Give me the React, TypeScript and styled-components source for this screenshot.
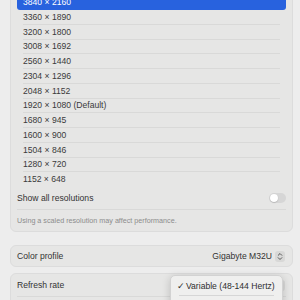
import styled, { createGlobalStyle } from 'styled-components'

const GlobalStyle = createGlobalStyle`
  html, body {
    margin: 0;
    padding: 0;
    background: #ededed;
    overflow: hidden;
    font-family: "Liberation Sans", Arial, sans-serif;
    -webkit-font-smoothing: antialiased;
  }
`

const Page = styled.div`
  display: flex;
  flex-direction: column;
  padding: 0 7px 0 10px;
  margin-top: -10px; /* scrolled list, top card is cut off */
`

const Card = styled.section<{ $gap?: number }>`
  position: relative;
  background: #e6e6e5;
  border: 1px solid #dcdcdc;
  border-radius: 6px;
  padding: 0 6px;
  margin-top: ${({ $gap }) => $gap ?? 0}px;
`

const ResolutionList = styled.ul`
  list-style: none;
  margin: 0;
  padding: 4.25px 0 0;
`

const ResolutionRow = styled.li<{ $selected?: boolean }>`
  height: 14.75px;
  box-sizing: border-box;
  padding: 0 6px;
  border-radius: 3px;
  background: ${({ $selected }) => ($selected ? '#2862de' : 'transparent')};
  color: ${({ $selected }) => ($selected ? '#ffffff' : '#3a3a3a')};
`

const RowInner = styled.div<{ $divider: boolean }>`
  height: 100%;
  box-sizing: border-box;
  display: flex;
  align-items: center;
  font-size: 8.6px;
  border-bottom: 1px solid ${({ $divider }) => ($divider ? '#d9d9d8' : 'transparent')};
`

const SettingRow = styled.div<{ $height: number; $divider?: boolean }>`
  position: relative;
  height: ${({ $height }) => $height}px;
  box-sizing: border-box;
  display: flex;
  align-items: center;
  justify-content: space-between;
  border-bottom: ${({ $divider }) => ($divider ? '1px solid #d9d9d8' : 'none')};
  font-size: 8.6px;
  color: #333333;
`

const Note = styled.div`
  height: 21px;
  display: flex;
  align-items: center;
  font-size: 7.2px;
  color: #8c8c8c;
`

const Toggle = styled.div<{ $on?: boolean }>`
  width: 17px;
  height: 10px;
  border-radius: 5px;
  background: ${({ $on }) => ($on ? '#2862de' : '#d6d6d6')};
  display: flex;
  align-items: center;
  padding: 0 1px;
  box-sizing: border-box;
  justify-content: ${({ $on }) => ($on ? 'flex-end' : 'flex-start')};
`

const Knob = styled.span`
  width: 8px;
  height: 8px;
  border-radius: 50%;
  background: #ffffff;
  box-shadow: 0 0.5px 1px rgba(0, 0, 0, 0.25);
`

const PopupValue = styled.div`
  display: flex;
  align-items: center;
  gap: 3px;
  color: #333333;
`

const Stepper = styled.span`
  width: 10px;
  height: 11px;
  border-radius: 3px;
  background: #d8d8d7;
  display: flex;
  align-items: center;
  justify-content: center;
  margin-right: 1px;
`

const Menu = styled.div`
  position: absolute;
  top: 0.5px;
  right: 3px;
  width: 113px;
  height: 60px;
  box-sizing: border-box;
  background: #efefee;
  border: 1px solid #d2d2d2;
  border-radius: 5px;
  box-shadow: 0 2px 8px rgba(0, 0, 0, 0.18);
  padding: 1px 0 0;
`

const MenuItem = styled.div`
  height: 18px;
  display: flex;
  align-items: center;
  gap: 2px;
  padding: 0 6px;
  font-size: 8.6px;
  color: #2e2e2e;
`

const Check = styled.span`
  width: 7px;
  font-size: 8.5px;
`

const MenuDivider = styled.div`
  height: 1px;
  margin: 0 8px;
  background: #d6d6d6;
`

const resolutions = [
  '3840 × 2160',
  '3360 × 1890',
  '3200 × 1800',
  '3008 × 1692',
  '2560 × 1440',
  '2304 × 1296',
  '2048 × 1152',
  '1920 × 1080 (Default)',
  '1680 × 945',
  '1600 × 900',
  '1504 × 846',
  '1280 × 720',
  '1152 × 648',
]

const StepperIcon = () => (
  <svg width="6" height="9" viewBox="0 0 6 9" fill="none" stroke="#555" strokeWidth="1" strokeLinecap="round" strokeLinejoin="round">
    <path d="M1.2 3.3 L3 1.5 L4.8 3.3" />
    <path d="M1.2 5.7 L3 7.5 L4.8 5.7" />
  </svg>
)

const App = () => {
  const selected = 0

  return (
    <>
      <GlobalStyle />
      <Page>
        <Card>
          <ResolutionList>
            {resolutions.map((r, i) => {
              const last = i === resolutions.length - 1
              return (
                <ResolutionRow key={r} $selected={i === selected}>
                  <RowInner $divider={i !== selected && !last}>{r}</RowInner>
                </ResolutionRow>
              )
            })}
          </ResolutionList>
          <SettingRow $height={23} $divider>
            <span>Show all resolutions</span>
            <Toggle>
              <Knob />
            </Toggle>
          </SettingRow>
          <Note>Using a scaled resolution may affect performance.</Note>
        </Card>

        <Card $gap={13}>
          <SettingRow $height={20}>
            <span>Color profile</span>
            <PopupValue>
              Gigabyte M32U
              <Stepper>
                <StepperIcon />
              </Stepper>
            </PopupValue>
          </SettingRow>
        </Card>

        <Card $gap={6}>
          <SettingRow $height={23} $divider>
            <span>Refresh rate</span>
            <PopupValue>
              <Stepper>
                <StepperIcon />
              </Stepper>
            </PopupValue>
            <Menu>
              <MenuItem>
                <Check>✓</Check>
                Variable (48-144 Hertz)
              </MenuItem>
              <MenuDivider />
            </Menu>
          </SettingRow>
          <SettingRow $height={22} />
        </Card>
      </Page>
    </>
  )
}

export default App
